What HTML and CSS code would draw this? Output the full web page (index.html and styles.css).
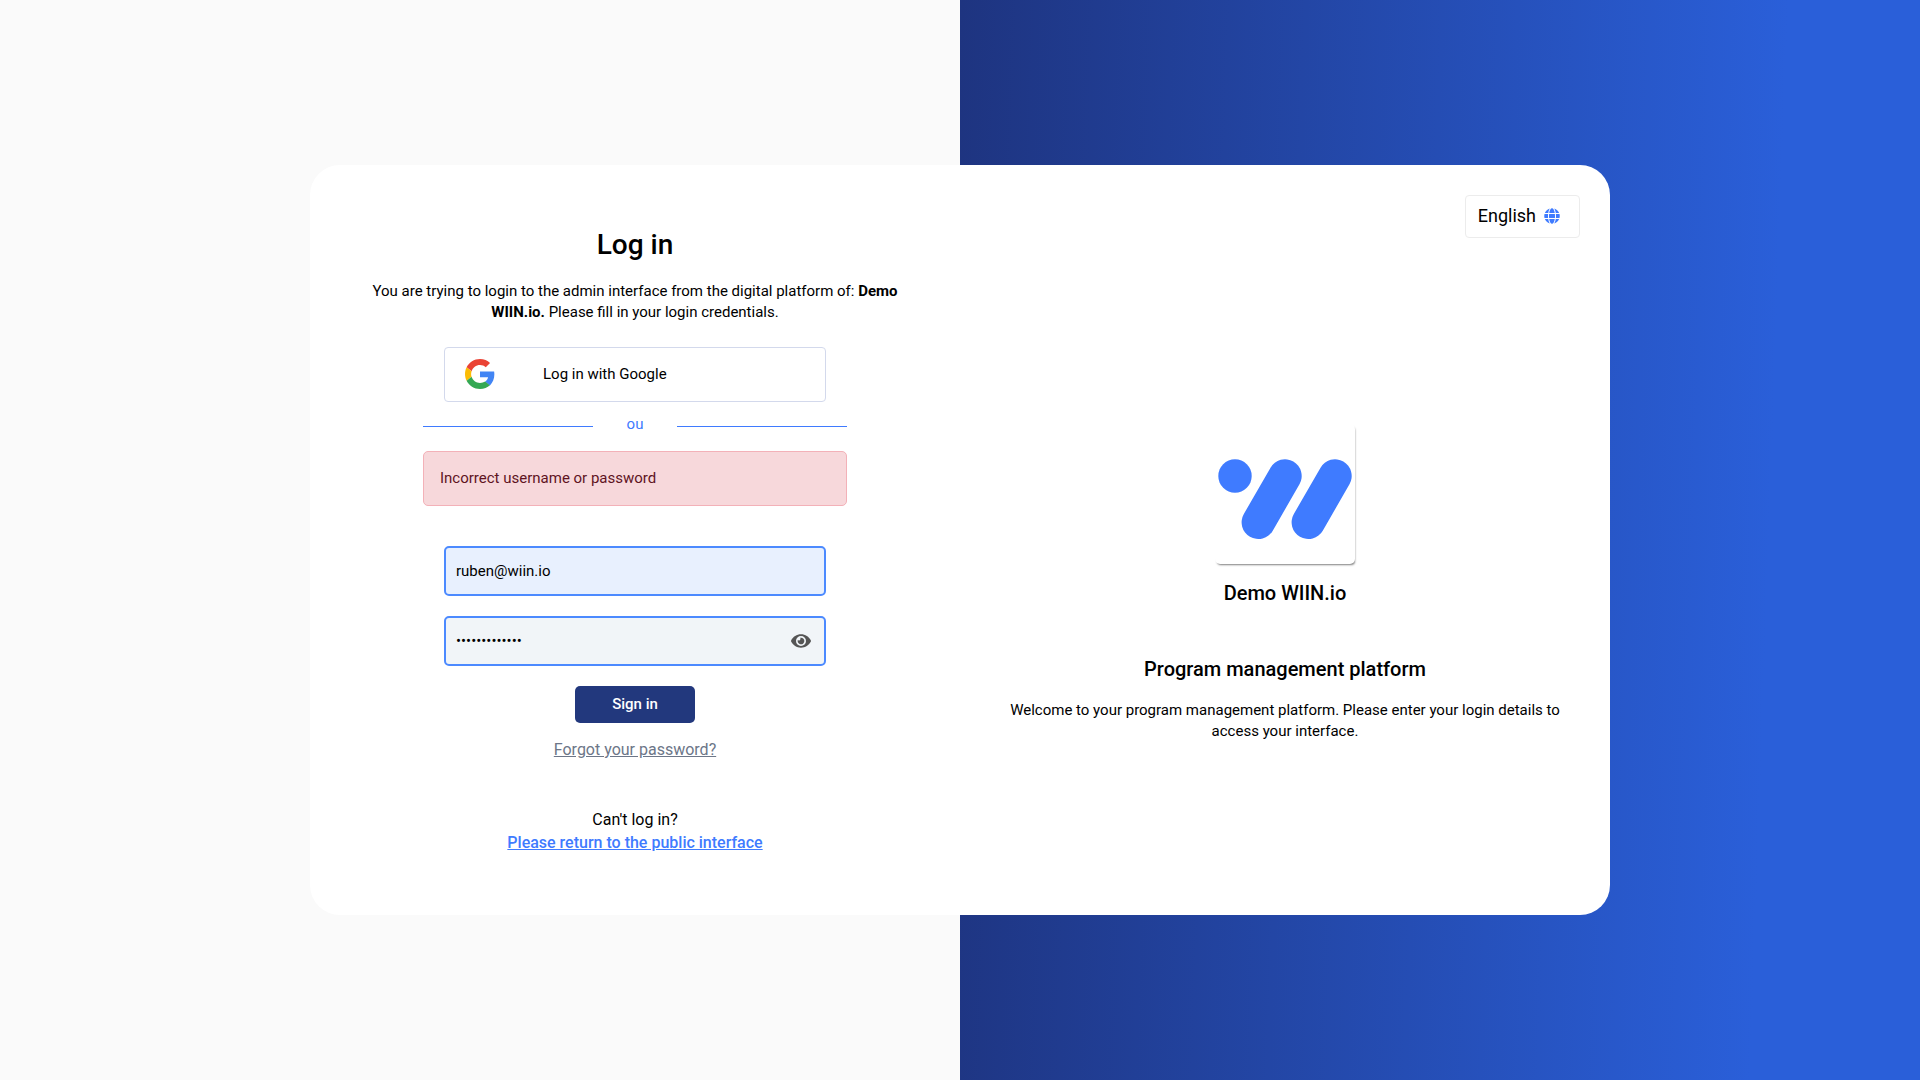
FILE: index.html
```html
<!DOCTYPE html>
<html lang="en">
<head>
    <meta charset="UTF-8">
    <meta name="viewport" content="width=device-width, initial-scale=1.0">
    <title>Log in - Demo WIIN.io</title>
    <link rel="stylesheet" href="styles.css">
</head>
<body>
    <main class="card">
        <section class="login">
            <h1>Log in</h1>
            <p class="intro">You are trying to login to the admin interface from the digital platform of: <b>Demo WIIN.io.</b> Please fill in your login credentials.</p>

            <button type="button" class="google-btn">
                <svg width="30" height="30" viewBox="0 0 48 48" aria-hidden="true">
                    <path fill="#EA4335" d="M24 9.5c3.54 0 6.71 1.22 9.21 3.6l6.85-6.85C35.9 2.38 30.47 0 24 0 14.62 0 6.51 5.38 2.56 13.22l7.98 6.19C12.43 13.72 17.74 9.5 24 9.5z"/>
                    <path fill="#4285F4" d="M46.98 24.55c0-1.57-.15-3.09-.38-4.55H24v9.02h12.94c-.58 2.96-2.26 5.48-4.78 7.18l7.73 6c4.51-4.18 7.09-10.36 7.09-17.65z"/>
                    <path fill="#FBBC05" d="M10.53 28.59c-.48-1.45-.76-2.99-.76-4.59s.27-3.14.76-4.59l-7.98-6.19C.92 16.46 0 20.12 0 24c0 3.88.92 7.54 2.56 10.78l7.97-6.19z"/>
                    <path fill="#34A853" d="M24 48c6.48 0 11.93-2.13 15.89-5.81l-7.73-6c-2.15 1.45-4.92 2.3-8.16 2.3-6.26 0-11.57-4.22-13.47-9.91l-7.98 6.19C6.51 42.62 14.62 48 24 48z"/>
                </svg>
                <span>Log in with Google</span>
            </button>

            <div class="divider"><span>ou</span></div>

            <div class="alert" role="alert">Incorrect username or password</div>

            <form class="login-form">
                <input type="email" class="field email" value="ruben@wiin.io" aria-label="Email">
                <div class="password-group">
                    <input type="password" class="field" value="demopassword1" aria-label="Password">
                    <button type="button" class="toggle-password" aria-label="Show password">
                        <svg width="20" height="18" viewBox="0 0 576 512" aria-hidden="true">
                            <path fill="#555" d="M572.52 241.4C518.29 135.59 410.93 64 288 64S57.68 135.64 3.48 241.41a32.35 32.35 0 0 0 0 29.19C57.71 376.41 165.07 448 288 448s230.32-71.64 284.52-177.41a32.35 32.35 0 0 0 0-29.19zM288 400a144 144 0 1 1 144-144 143.93 143.93 0 0 1-144 144zm0-240a95.31 95.31 0 0 0-25.31 3.79 47.85 47.85 0 0 1-66.9 66.9A95.78 95.78 0 1 0 288 160z"/>
                        </svg>
                    </button>
                </div>
                <button type="submit" class="submit-btn">Sign in</button>
            </form>

            <a href="#" class="forgot">Forgot your password?</a>

            <p class="help">Can't log in?<br><a href="#">Please return to the public interface</a></p>
        </section>

        <section class="about">
            <button type="button" class="language">
                <span>English</span>
                <svg width="16" height="16" viewBox="0 0 496 512" aria-hidden="true">
                    <path fill="#3f7bff" d="M336.5 160C322 70.7 287.8 8 248 8s-74 62.7-88.5 152h177zM152 256c0 22.2 1.2 43.5 3.3 64h185.3c2.1-20.5 3.3-41.8 3.3-64s-1.2-43.5-3.3-64H155.3c-2.1 20.5-3.3 41.8-3.3 64zm324.7-96c-28.6-67.9-86.5-120.4-158-141.6 24.4 33.8 41.2 84.7 50 141.6h108zM177.2 18.4C105.8 39.6 47.8 92.1 19.3 160h108c8.7-56.9 25.5-107.8 49.9-141.6zM487.4 192H372.7c2.1 21 3.3 42.5 3.3 64s-1.2 43-3.3 64h114.6c5.5-20.5 8.6-41.8 8.6-64s-3.1-43.5-8.5-64zM120 256c0-21.5 1.2-43 3.3-64H8.6C3.2 212.5 0 233.8 0 256s3.2 43.5 8.6 64h114.6c-2-21-3.2-42.5-3.2-64zm39.5 96c14.5 89.3 48.7 152 88.5 152s74-62.7 88.5-152h-177zm159.3 141.6c71.4-21.2 129.4-73.7 158-141.6h-108c-8.8 56.9-25.6 107.8-50 141.6zM19.3 352c28.6 67.9 86.5 120.4 158 141.6-24.4-33.8-41.2-84.7-50-141.6h-108z"/>
                </svg>
            </button>

            <div class="about-content">
                <svg class="logo" width="140" height="140" viewBox="0 0 140 140" role="img" aria-label="WIIN.io logo">
                    <circle cx="20" cy="52" r="16.7" fill="#3f7bff"/>
                    <path d="M70 52L43.3 98.3M120 52L93.3 98.3" stroke="#3f7bff" stroke-width="33.4" stroke-linecap="round"/>
                </svg>
                <h2>Demo WIIN.io</h2>
                <h2 class="subtitle">Program management platform</h2>
                <p>Welcome to your program management platform. Please enter your login details to access your interface.</p>
            </div>
        </section>
    </main>
</body>
</html>
```
FILE: styles.css
```css
* {
    box-sizing: border-box;
}
body {
    margin: 0;
    min-height: 100vh;
    display: flex;
    justify-content: center;
    align-items: center;
    font-family: Roboto, sans-serif;
    font-size: 15px;
    line-height: 21px;
    color: #000;
    background: #fafafa linear-gradient(92deg, #1e3480 0%, #2a5fd9 83%) right / 50% 100% no-repeat;
}
button, input {
    font-family: inherit;
    font-size: inherit;
    color: inherit;
}
button {
    line-height: 20px;
    cursor: pointer;
}
h1, h2, p {
    margin: 0;
}
.card {
    display: grid;
    grid-template-columns: 1fr 1fr;
    width: 90%;
    max-width: 1300px;
    min-height: 750px;
    background-color: #fff;
    border-radius: 30px;
}

/* Login side */
.login {
    display: flex;
    flex-direction: column;
    align-items: center;
    padding: 60px;
    text-align: center;
}
h1 {
    font-size: 28px;
    line-height: 40px;
    font-weight: 500;
}
.intro {
    margin-top: 16px;
}
.google-btn {
    display: flex;
    align-items: center;
    gap: 48px;
    width: 100%;
    max-width: 382px;
    height: 55px;
    margin-top: 24px;
    padding: 0 20px 2px;
    background-color: #fff;
    border: 1px solid #d3d9ec;
    border-radius: 4px;
}
.divider {
    display: flex;
    align-items: center;
    width: 100%;
    max-width: 424px;
    margin-top: 12px;
    color: #3f7bff;
}
.divider span {
    width: 84px;
}
.divider::before,
.divider::after {
    content: "";
    flex: 1;
    margin-top: 3px;
    border-top: 1px solid #3f7bff;
}
.alert {
    width: 100%;
    max-width: 424px;
    margin-top: 16px;
    padding: 16px;
    background-color: #f7d8db;
    border: 1px solid #f3b1b8;
    border-radius: 5px;
    color: #60141f;
    text-align: left;
}
.login-form {
    display: flex;
    flex-direction: column;
    align-items: center;
    gap: 20px;
    width: 100%;
    max-width: 382px;
    margin-top: 40px;
}
.field {
    display: block;
    width: 100%;
    height: 50px;
    padding: 0 10px;
    background-color: #f1f5f8;
    border: 2px solid #4c8aff;
    border-radius: 5px;
}
.email {
    background-color: #e8f0fe;
}
.password-group {
    position: relative;
    width: 100%;
}
.toggle-password {
    position: absolute;
    top: 0;
    right: 0;
    display: flex;
    align-items: center;
    height: 100%;
    padding: 0 15px;
    background: none;
    border: 0;
}
.submit-btn {
    width: 120px;
    height: 37px;
    padding: 0 0 2px;
    background-color: #22387d;
    border: 0;
    border-radius: 5px;
    color: #fff;
    font-weight: 500;
}
.forgot {
    margin-top: 16px;
    font-size: 16px;
    color: #6c7688;
}
.help {
    margin-top: 48px;
    font-size: 16px;
    line-height: 23px;
}
.help a {
    color: #3f7bff;
    font-weight: 500;
}

/* Platform side */
.about {
    display: flex;
    flex-direction: column;
    padding: 30px;
    text-align: center;
}
.language {
    display: flex;
    align-items: center;
    align-self: flex-end;
    gap: 8px;
    height: 43px;
    padding: 0 19px 2px 12px;
    background-color: #fff;
    border: 1px solid #ececec;
    border-radius: 4px;
    font-size: 18px;
}
.about-content {
    display: flex;
    flex-direction: column;
    align-items: center;
    flex: 1;
    justify-content: center;
    padding: 43px 20px 0;
}
.logo {
    border-radius: 5px;
    box-shadow: 1px 2px 2px -1px rgba(0, 0, 0, 0.5);
}
h2 {
    margin-top: 15px;
    font-size: 20px;
    line-height: 28px;
    font-weight: 500;
}
.subtitle {
    margin: 48px 0 17px;
}
```
